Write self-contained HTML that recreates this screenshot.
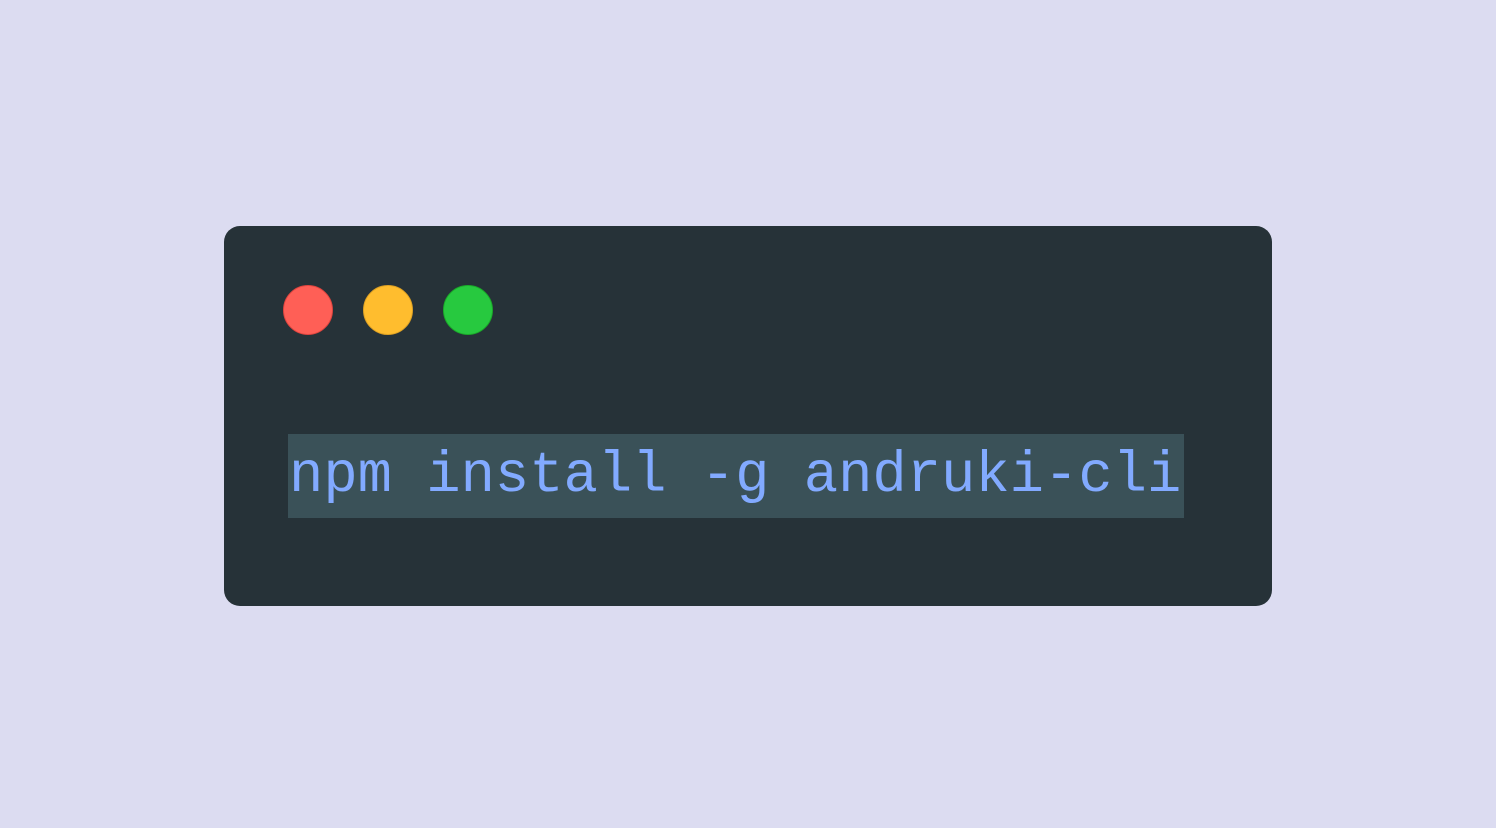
<!DOCTYPE html>
<html><head><style>
html,body{margin:0;padding:0}
body{width:1496px;height:828px;background:#dcdcf1;position:relative;overflow:hidden}
.win{position:absolute;left:224px;top:226px;width:1048px;height:380px;background:#263238;border-radius:16px}
.dot{position:absolute;top:59px;width:50px;height:50px;border-radius:50%;box-sizing:border-box}
.r{left:59px;background:#ff5f56;border:1px solid #e0443e}
.y{left:139px;background:#ffbd2e;border:1px solid #dea123}
.g{left:219px;background:#27c93f;border:1px solid #1aab29}
.hl{position:absolute;left:64px;top:208px;width:896px;height:84px;background:#3a5158}
.t{position:absolute;left:65px;top:209px;height:84px;line-height:84px;font-family:"Liberation Mono","DejaVu Sans Mono",monospace;font-size:57.2px;color:#82aaff;white-space:pre}
</style></head><body>
<div class="win">
<div class="dot r"></div><div class="dot y"></div><div class="dot g"></div>
<div class="hl"></div>
<div class="t">npm install -g andruki-cli</div>
</div>
</body></html>
